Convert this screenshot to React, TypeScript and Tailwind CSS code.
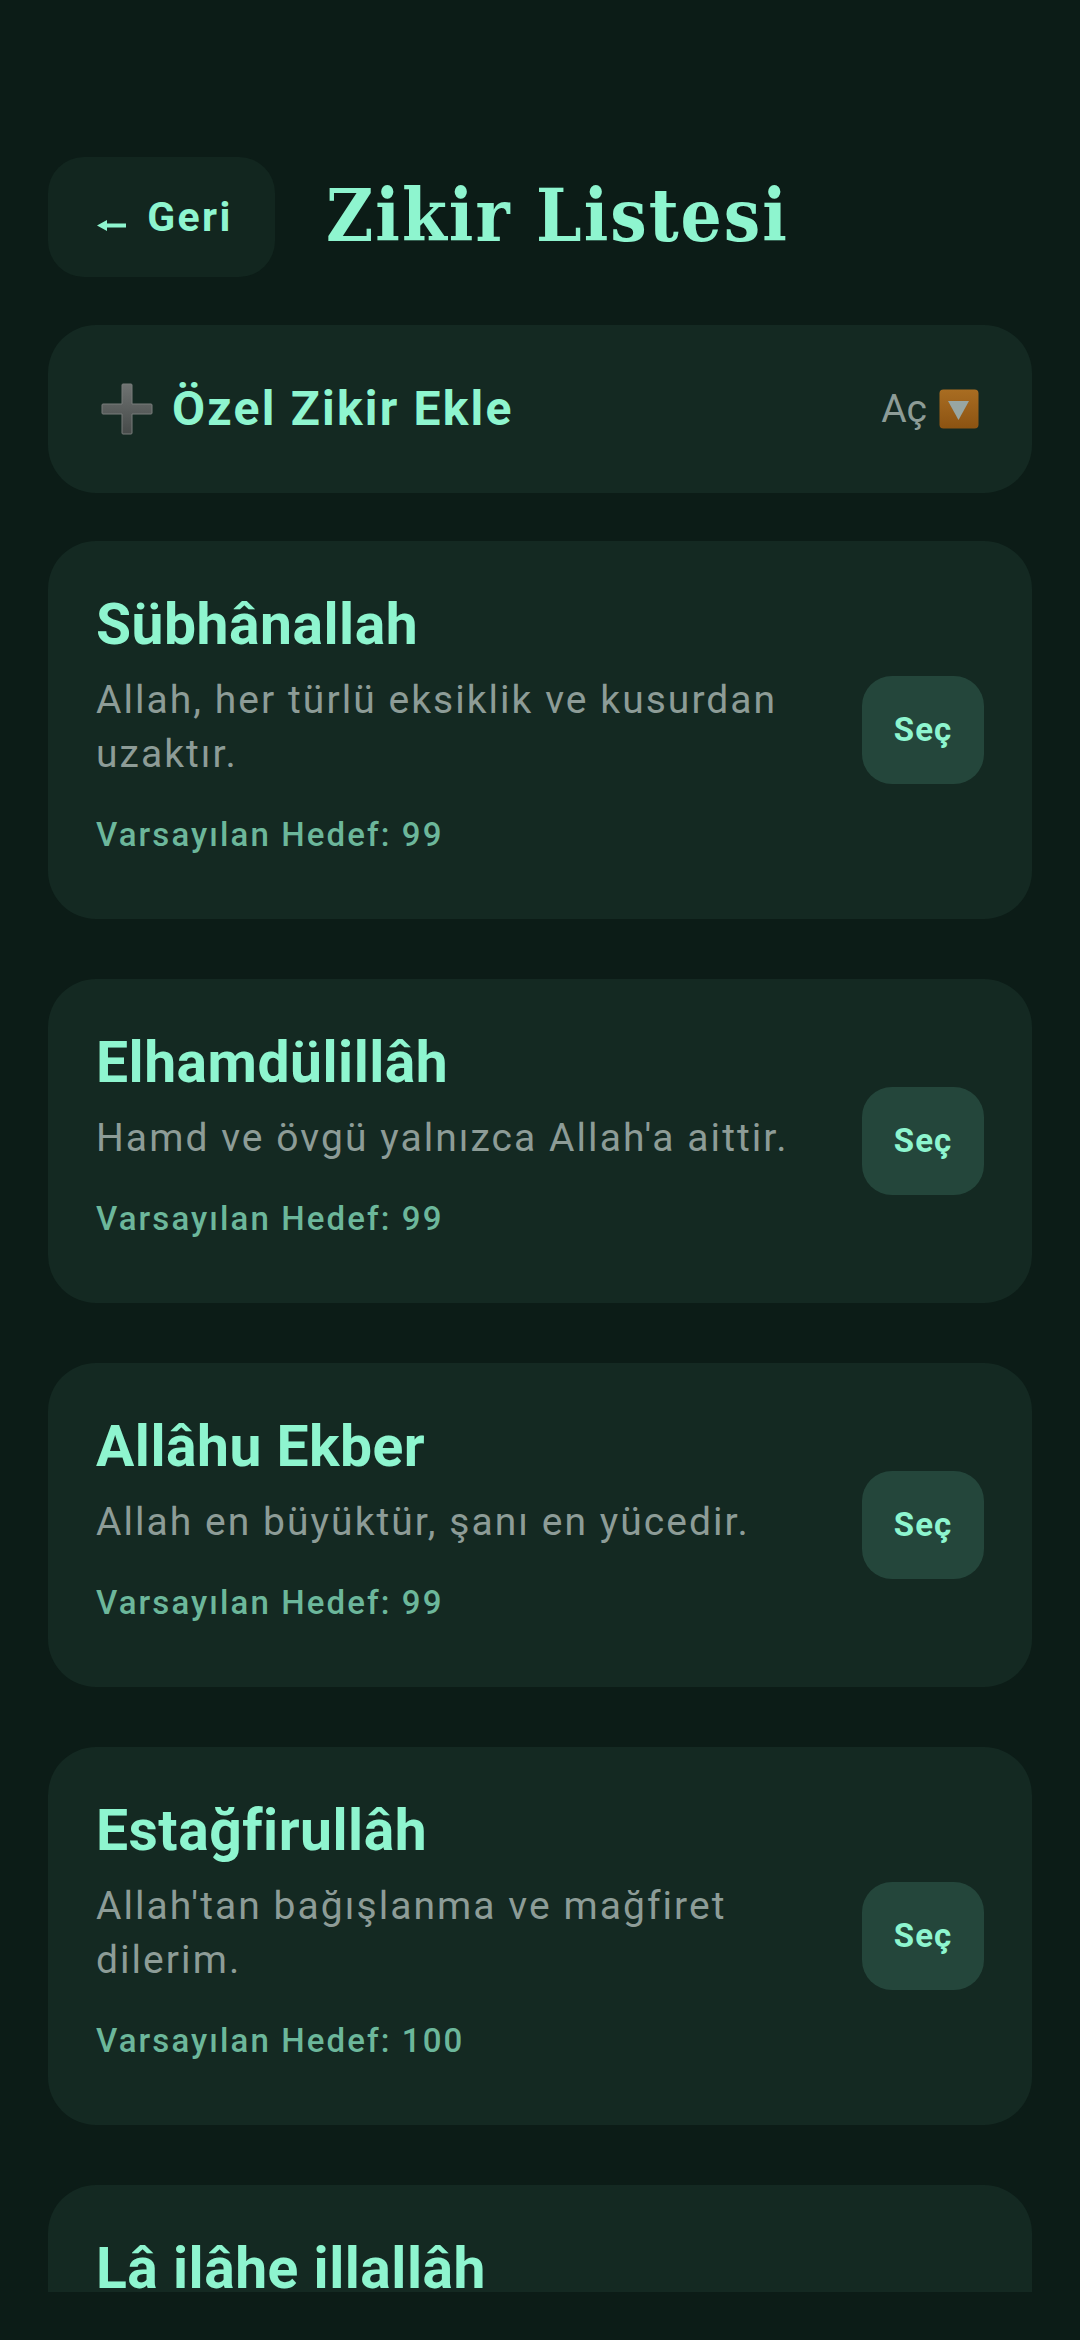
const zikirler: { name: string; meaning?: string; target?: number }[] = [
  { name: 'Sübhânallah', meaning: 'Allah, her türlü eksiklik ve kusurdan uzaktır.', target: 99 },
  { name: 'Elhamdülillâh', meaning: "Hamd ve övgü yalnızca Allah'a aittir.", target: 99 },
  { name: 'Allâhu Ekber', meaning: 'Allah en büyüktür, şanı en yücedir.', target: 99 },
  { name: 'Estağfirullâh', meaning: "Allah'tan bağışlanma ve mağfiret dilerim.", target: 100 },
  { name: 'Lâ ilâhe illallâh' },
]

function BackArrow() {
  return (
    <svg width="29" height="11" viewBox="0 0 29 11" className="mt-[17px] shrink-0">
      <path d="M0 5.500 10 0v3.500h19v4H10V11z" fill="#8ef5cf" />
    </svg>
  )
}

function PlusEmoji() {
  return (
    <svg width="54" height="54" viewBox="0 0 54 54" className="ml-[4px] shrink-0">
      <defs>
        <linearGradient id="plusFill" x1="0" y1="0" x2="0" y2="1">
          <stop offset="0" stopColor="#6f7372" />
          <stop offset="1" stopColor="#464a49" />
        </linearGradient>
      </defs>
      <path
        d="M23 2h8a1 1 0 0 1 1 1v19h19a1 1 0 0 1 1 1v8a1 1 0 0 1-1 1H32v19a1 1 0 0 1-1 1h-8a1 1 0 0 1-1-1V32H3a1 1 0 0 1-1-1v-8a1 1 0 0 1 1-1h19V3a1 1 0 0 1 1-1z"
        fill="url(#plusFill)"
        stroke="#787c7b"
        strokeWidth="1"
      />
    </svg>
  )
}

function DownEmoji() {
  return (
    <svg width="40" height="40" viewBox="0 0 40 40" className="shrink-0">
      <defs>
        <linearGradient id="downFill" x1="0" y1="0" x2="0" y2="1">
          <stop offset="0" stopColor="#a96d22" />
          <stop offset="1" stopColor="#8c5312" />
        </linearGradient>
      </defs>
      <rect x="0.5" y="0.5" width="39" height="39" rx="4" fill="url(#downFill)" />
      <path d="M9 12h21L19.500 31z" fill="#98a6a2" />
    </svg>
  )
}

function ZikirCard({ name, meaning, target }: { name: string; meaning?: string; target?: number }) {
  return (
    <div className="flex shrink-0 items-center justify-between gap-[48px] rounded-[48px] bg-[#142922] p-[48px]">
      <div className="min-w-0 flex-1">
        <h3 className="text-[57px] leading-[72px] font-bold tracking-[0.5px] text-[#8ef5cf]">{name}</h3>
        {meaning && <p className="mt-[12px] text-[39px] leading-[54px] tracking-[2.05px] text-[#8d9c97]">{meaning}</p>}
        {target && (
          <p className="mt-[27px] mb-[9px] text-[33px] leading-[54px] font-medium tracking-[2.1px] text-[#6cb79b]">
            Varsayılan Hedef: {target}
          </p>
        )}
      </div>
      {meaning && (
        <button className="flex h-[108px] w-[122px] shrink-0 items-center justify-center rounded-[30px] bg-[#24463b] text-[33px] font-bold tracking-[1px] text-[#8ef5cf]">
          Seç
        </button>
      )}
    </div>
  )
}

export default function App() {
  return (
    <div className="flex h-[2340px] w-[1080px] flex-col overflow-hidden bg-[#0c1c17] px-[48px] pt-[157px] pb-[48px] font-['Roboto',sans-serif]">
      <div className="mb-[48px] flex items-center gap-[51px]">
        <button className="flex h-[120px] w-[227px] items-center justify-center gap-[21px] rounded-[36px] bg-[#12261f] pl-[7px] text-[41px] font-bold tracking-[2.4px] text-[#8ef5cf]">
          <BackArrow />
          <span className="pt-[2px]">Geri</span>
        </button>
        <h1 className="pb-[2px] font-['DejaVu_Serif_Condensed','DejaVu_Serif',serif] text-[72px] leading-[84px] font-bold tracking-[2px] text-[#8ef5cf]">
          Zikir Listesi
        </h1>
      </div>

      <div className="mb-[48px] flex h-[168px] shrink-0 items-center justify-between rounded-[48px] bg-[#142922] pr-[53px] pl-[48px]">
        <div className="flex items-center gap-[18px]">
          <PlusEmoji />
          <span className="text-[48px] font-bold tracking-[2.2px] text-[#8ef5cf]">Özel Zikir Ekle</span>
        </div>
        <div className="flex items-center gap-[12px] text-[39px] text-[#8d9c97]">
          <span>Aç</span>
          <DownEmoji />
        </div>
      </div>

      <div className="flex min-h-0 flex-1 flex-col gap-[60px] overflow-hidden">
        {zikirler.map((z) => (
          <ZikirCard key={z.name} name={z.name} meaning={z.meaning} target={z.target} />
        ))}
      </div>
    </div>
  )
}
